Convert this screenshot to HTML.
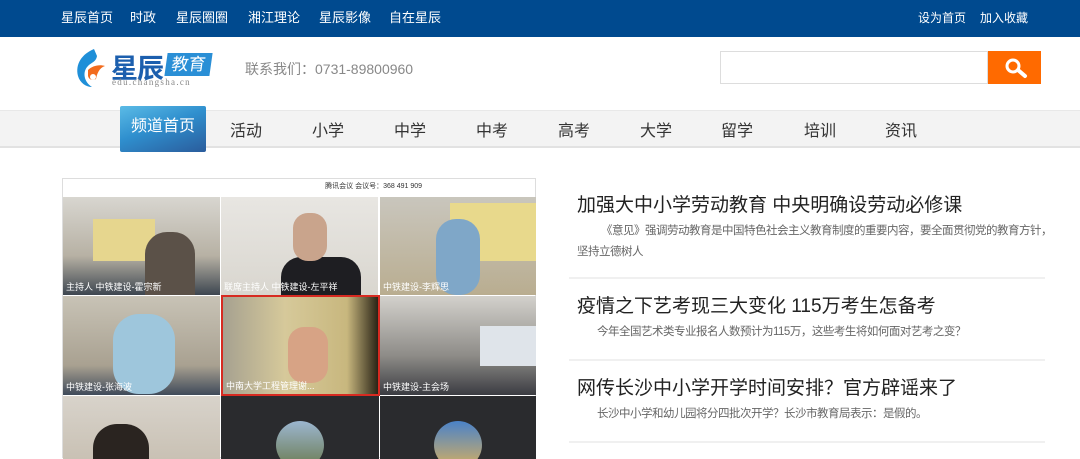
<!DOCTYPE html>
<html><head><meta charset="utf-8"><style>
*{margin:0;padding:0;box-sizing:border-box}
body{width:1080px;height:458px;overflow:hidden;background:#fff;font-family:"Liberation Sans","Noto Sans CJK SC",sans-serif;position:relative}
.a{position:absolute}
.top{left:0;top:0;width:1080px;height:37px;background:#004a8f;color:#fff;font-size:13px}
.top span{position:absolute;top:7px}
.nav{left:0;top:110px;width:1080px;height:38px;background:#f3f3f3;border-top:1px solid #e8e8e8;border-bottom:2px solid #e2e2e2}
.nav span{position:absolute;top:6px;font-size:16px;color:#333}
.act{left:120px;top:106px;width:86px;height:46px;background:linear-gradient(160deg,#5bbbe6 0%,#2f8fce 45%,#2a5c9c 100%);color:#fff;font-size:16px;text-align:center;line-height:42px;border-radius:2px}
.t{font-size:19px;color:#222;left:577px}
.d{font-size:11.5px;color:#666;left:577px;line-height:21px;white-space:nowrap;letter-spacing:-0.5px}
.hr{left:569px;width:476px;height:2px;background:#f0f0f0}
.tile{position:absolute;overflow:hidden}
.lab{position:absolute;bottom:2px;left:3px;font-size:9px;color:#fff}
</style></head><body>
<div class="a top">
<span style="left:61px">星辰首页</span><span style="left:130px">时政</span><span style="left:176px">星辰圈圈</span><span style="left:248px">湘江理论</span><span style="left:319px">星辰影像</span><span style="left:389px">自在星辰</span>
<span style="left:918px;font-size:12px;top:9px">设为首页</span><span style="left:980px;font-size:12px;top:9px">加入收藏</span>
</div>
<svg class="a" style="left:74px;top:48px" width="36" height="40" viewBox="0 0 36 40"><path d="M20 1C8 6 1 16 4 28c2 7 8 11 14 11C10 34 8 24 14 18c4-4 8-4 9-10z" fill="#1f8fd8"/><path d="M14 22c4-4 11-6 17-4-6 2-8 8-9 13-3 2-7 1-8-3z" fill="#f26b1d"/><circle cx="19" cy="29" r="3" fill="#fff"/></svg>
<div class="a" style="left:111px;top:47px;font-size:27px;font-weight:bold;color:#1c5fae;letter-spacing:-1px">星辰</div>
<div class="a" style="left:166px;top:53px;width:45px;height:23px;background:#2a8fd6;color:#fff;font-size:17px;line-height:23px;text-align:center;transform:skewX(-8deg)">教育</div>
<div class="a" style="left:112px;top:77px;font-size:9px;color:#888;font-family:'Liberation Serif',serif;letter-spacing:1.3px">edu.changsha.cn</div>
<div class="a" style="left:245px;top:59px;font-size:14px;color:#888">联系我们：0731-89800960</div>
<div class="a" style="left:720px;top:51px;width:268px;height:33px;border:1px solid #ddd"></div>
<div class="a" style="left:988px;top:51px;width:53px;height:33px;background:#ff6a00"></div>
<svg class="a" style="left:1003px;top:56px" width="26" height="24" viewBox="0 0 26 24"><circle cx="10" cy="10" r="6" stroke="#fff" stroke-width="3" fill="none"/><path d="M15 14l7 6" stroke="#fff" stroke-width="4" stroke-linecap="round"/></svg>
<div class="a nav">
<span style="left:230px">活动</span><span style="left:312px">小学</span><span style="left:394px">中学</span><span style="left:476px">中考</span><span style="left:558px">高考</span><span style="left:640px">大学</span><span style="left:721px">留学</span><span style="left:804px">培训</span><span style="left:885px">资讯</span>
</div>
<div class="a act">频道首页</div>
<div class="a" style="left:62px;top:178px;width:474px;height:280px;background:#fff;border:1px solid #ddd">
<div class="a" style="left:0;top:2px;width:472px;text-align:right;padding-right:113px;font-size:7px;color:#333">腾讯会议 会议号：368 491 909</div>
<div class="tile" style="left:0;top:18px;width:157px;height:98px;background:linear-gradient(180deg,#d8d6d0,#b7b1a4 60%,#3d4650)"><div class="a" style="left:30px;top:22px;width:62px;height:42px;background:#e6d68e"></div><div class="a" style="left:82px;top:35px;width:50px;height:63px;border-radius:22px 22px 0 0;background:#5b5148"></div><div class="lab">主持人 中铁建设-霍宗新</div></div>
<div class="tile" style="left:158px;top:18px;width:157px;height:98px;background:linear-gradient(180deg,#e8e6e2,#d9d6cf)"><div class="a" style="left:60px;top:60px;width:80px;height:38px;background:#1e1e22;border-radius:20px 20px 0 0"></div><div class="a" style="left:72px;top:16px;width:34px;height:48px;border-radius:15px;background:#c9a48c"></div><div class="lab">联席主持人 中铁建设-左平祥</div></div>
<div class="tile" style="left:317px;top:18px;width:156px;height:98px;background:linear-gradient(180deg,#c9c6bd,#b9ad90)"><div class="a" style="left:70px;top:6px;width:86px;height:58px;background:#e8d98c"></div><div class="a" style="left:56px;top:22px;width:44px;height:76px;border-radius:20px;background:#7fa7c8"></div><div class="lab">中铁建设-李辉思</div></div>
<div class="tile" style="left:0;top:117px;width:157px;height:99px;background:linear-gradient(180deg,#c8c3b6,#a9a191 70%,#3f4a5a)"><div class="a" style="left:50px;top:18px;width:62px;height:80px;border-radius:26px;background:#9ec6dc"></div><div class="lab">中铁建设-张海波</div></div>
<div class="tile" style="left:158px;top:116px;width:159px;height:101px;border:2px solid #d72a21;background:linear-gradient(90deg,#a6a190,#d6c99a 40%,#c8b77e 80%,#2a2416)"><div class="a" style="left:65px;top:30px;width:40px;height:56px;border-radius:16px;background:#d7a385"></div><div class="lab">中南大学工程管理谢...</div></div>
<div class="tile" style="left:317px;top:117px;width:156px;height:99px;background:linear-gradient(180deg,#d3d1cc,#8e8c88 60%,#3b3c42)"><div class="a" style="left:100px;top:30px;width:56px;height:40px;background:#dfe4ea"></div><div class="lab">中铁建设-主会场</div></div>
<div class="tile" style="left:0;top:217px;width:157px;height:63px;background:linear-gradient(180deg,#d8d3cb,#c9c1b4)"><div class="a" style="left:30px;top:28px;width:56px;height:40px;border-radius:24px 24px 0 0;background:#2a2420"></div></div>
<div class="tile" style="left:158px;top:217px;width:158px;height:63px;background:#2a2b2e"><div class="a" style="left:55px;top:25px;width:48px;height:48px;border-radius:50%;background:linear-gradient(180deg,#9cb6d0,#6a7a4e)"></div></div>
<div class="tile" style="left:317px;top:217px;width:156px;height:63px;background:#2a2b2e"><div class="a" style="left:54px;top:25px;width:48px;height:48px;border-radius:50%;background:linear-gradient(180deg,#4a82c8,#d7b060)"></div></div>
</div>
<div class="a t" style="top:190px">加强大中小学劳动教育 中央明确设劳动必修课</div>
<div class="a d" style="top:221px;text-indent:24px">《意见》强调劳动教育是中国特色社会主义教育制度的重要内容，要全面贯彻党的教育方针，<br>坚持立德树人</div>
<div class="a hr" style="top:277px"></div>
<div class="a t" style="top:291px">疫情之下艺考现三大变化 115万考生怎备考</div>
<div class="a d" style="top:322px;text-indent:20px">今年全国艺术类专业报名人数预计为115万，这些考生将如何面对艺考之变？</div>
<div class="a hr" style="top:359px"></div>
<div class="a t" style="top:373px">网传长沙中小学开学时间安排？官方辟谣来了</div>
<div class="a d" style="top:404px;text-indent:20px">长沙中小学和幼儿园将分四批次开学？长沙市教育局表示：是假的。</div>
<div class="a hr" style="top:441px"></div>
</body></html>
